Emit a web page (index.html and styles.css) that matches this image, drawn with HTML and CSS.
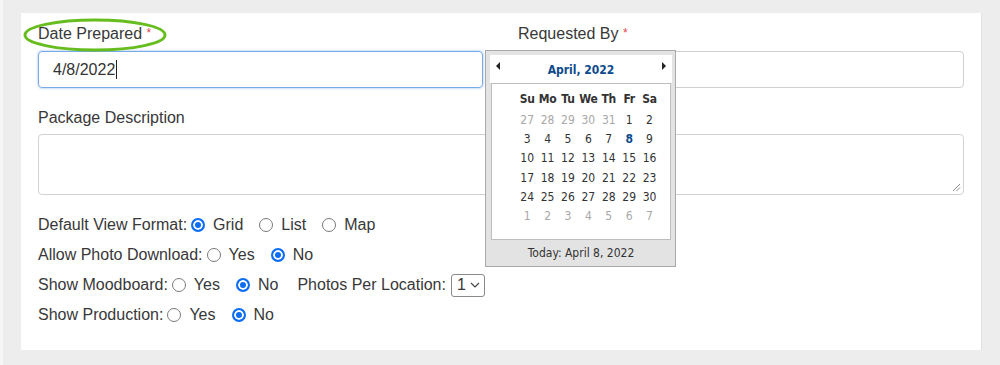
FILE: index.html
```html
<!DOCTYPE html>
<html>
<head>
<meta charset="utf-8">
<link rel="stylesheet" href="styles.css">
</head>
<body>
<div class="page">
  <div class="panel">
    <div class="top-grid">
      <div class="field">
        <div class="label">Date Prepared <span class="req">*</span></div>
        <div class="input focused"><span class="val">4/8/2022</span><span class="caret"></span></div>
      </div>
      <div class="field">
        <div class="label">Requested By <span class="req">*</span></div>
        <div class="input"></div>
      </div>
    </div>
    <div class="field desc">
      <div class="label">Package Description</div>
      <div class="textarea">
        <svg class="grip" width="9" height="9" viewBox="0 0 9 9"><path d="M1 8L8 1M4.5 8L8 4.5" stroke="#8a8a8a" stroke-width="1" fill="none"/></svg>
      </div>
    </div>
    <div class="options">
      <div class="opt-row">
        <span class="opt-label">Default View Format:</span>
        <span class="radio on"></span><span class="opt-text">Grid</span>
        <span class="radio"></span><span class="opt-text">List</span>
        <span class="radio"></span><span class="opt-text">Map</span>
      </div>
      <div class="opt-row">
        <span class="opt-label">Allow Photo Download:</span>
        <span class="radio"></span><span class="opt-text">Yes</span>
        <span class="radio on"></span><span class="opt-text">No</span>
      </div>
      <div class="opt-row">
        <span class="opt-label">Show Moodboard:</span>
        <span class="radio"></span><span class="opt-text">Yes</span>
        <span class="radio on"></span><span class="opt-text">No</span>
        <span class="opt-label extra">Photos Per Location:</span>
        <span class="select">1<svg width="10" height="6" viewBox="0 0 10 6"><path d="M1 1l4 4 4-4" stroke="#444" stroke-width="1.2" fill="none"/></svg></span>
      </div>
      <div class="opt-row last">
        <span class="opt-label">Show Production:</span>
        <span class="radio"></span><span class="opt-text">Yes</span>
        <span class="radio on"></span><span class="opt-text">No</span>
      </div>
    </div>

    <svg class="annot" width="146" height="36" viewBox="0 0 146 36"><ellipse cx="73" cy="18" rx="70" ry="15" fill="none" stroke="#67bd1e" stroke-width="3"/></svg>

    <div class="calendar">
      <div class="cal-head">
        <span class="arrow left"></span>
        <span class="month">April, 2022</span>
        <span class="arrow right"></span>
      </div>
      <div class="cal-body">
        <table class="days">
          <thead><tr><th>Su</th><th>Mo</th><th>Tu</th><th>We</th><th>Th</th><th>Fr</th><th>Sa</th></tr></thead>
          <tbody>
            <tr><td class="o">27</td><td class="o">28</td><td class="o">29</td><td class="o">30</td><td class="o">31</td><td>1</td><td>2</td></tr>
            <tr><td>3</td><td>4</td><td>5</td><td>6</td><td>7</td><td class="today">8</td><td>9</td></tr>
            <tr><td>10</td><td>11</td><td>12</td><td>13</td><td>14</td><td>15</td><td>16</td></tr>
            <tr><td>17</td><td>18</td><td>19</td><td>20</td><td>21</td><td>22</td><td>23</td></tr>
            <tr><td>24</td><td>25</td><td>26</td><td>27</td><td>28</td><td>29</td><td>30</td></tr>
            <tr><td class="o">1</td><td class="o">2</td><td class="o">3</td><td class="o">4</td><td class="o">5</td><td class="o">6</td><td class="o">7</td></tr>
          </tbody>
        </table>
      </div>
      <div class="cal-foot">Today: April 8, 2022</div>
    </div>
  </div>
</div>
</body>
</html>
```

FILE: styles.css
```css
html, body {
  margin: 0;
  padding: 0;
  background: #ededed;
}
body {
  width: 1000px;
  height: 365px;
  overflow: hidden;
  font-family: "Liberation Sans", Arial, sans-serif;
  color: #383838;
}
.page {
  border-left: 3px solid #f6f6f6;
  padding: 13px 0 0 18px;
  height: 352px;
}
.panel {
  position: relative;
  width: 943px;
  height: 337px;
  background: #fff;
  border-right: 1px solid #e0e0e0;
  padding: 0 0 0 17px;
  box-sizing: content-box;
}
.top-grid {
  display: grid;
  grid-template-columns: 445px 446px;
  column-gap: 35px;
  padding-top: 11px;
}
.label {
  font-size: 16px;
  line-height: 20px;
  height: 18px;
  color: #383838;
}
.req {
  color: #e5484d;
  font-size: 12px;
  position: relative;
  top: -2px;
}
.input {
  margin-top: 9px;
  height: 37px;
  box-sizing: border-box;
  border: 1px solid #cfcfcf;
  border-radius: 4px;
  display: flex;
  align-items: center;
  padding-left: 14px;
  font-size: 16px;
  color: #333;
}
.input.focused {
  border-color: #78aae6;
  box-shadow: 0 0 2px 1px rgba(110, 165, 230, 0.35);
}
.caret {
  display: inline-block;
  width: 1px;
  height: 19px;
  background: #222;
  margin-left: 1px;
}
.desc {
  margin-top: 20px;
}
.textarea {
  margin-top: 8px;
  width: 926px;
  height: 61px;
  box-sizing: border-box;
  border: 1px solid #d2d2d2;
  border-radius: 4px;
  position: relative;
}
.grip {
  position: absolute;
  right: 2px;
  bottom: 2px;
}
.options {
  margin-top: 15px;
}
.opt-row {
  display: flex;
  align-items: center;
  height: 30px;
  font-size: 16px;
  color: #383838;
}
.opt-row.last {
  height: 29px;
}
.opt-label {
  margin-right: 4px;
}
.opt-label.extra {
  margin-left: 3px;
  margin-right: 5px;
}
.opt-text {
  margin-left: 8px;
  margin-right: 16px;
}
.radio {
  width: 14px;
  height: 14px;
  box-sizing: border-box;
  border: 1px solid #7a7a7a;
  border-radius: 50%;
  background: #fff;
  flex: none;
}
.radio.on {
  border: 2px solid #0d6ef5;
  background: #0d6ef5;
  box-shadow: inset 0 0 0 2px #fff;
}
.select {
  display: flex;
  align-items: center;
  justify-content: space-between;
  width: 34px;
  height: 23px;
  box-sizing: border-box;
  border: 1px solid #8a8a8a;
  border-radius: 3px;
  padding: 0 4px 0 5px;
  font-size: 16px;
}
.annot {
  position: absolute;
  left: 1px;
  top: 4px;
}
.calendar {
  position: absolute;
  left: 464px;
  top: 37px;
  width: 191px;
  height: 217px;
  box-sizing: border-box;
  border: 1px solid #a9a9a9;
  background: #e3e3e3;
  padding: 4px 3px 0 4px;
  font-family: "DejaVu Sans Condensed", "DejaVu Sans", Verdana, sans-serif;
  display: flex;
  flex-direction: column;
}
.cal-head {
  height: 28px;
  background: #fff;
  display: flex;
  align-items: center;
  justify-content: space-between;
  padding: 0 6px 0 6px;
}
.arrow {
  width: 0;
  height: 0;
  border-top: 4px solid transparent;
  border-bottom: 4px solid transparent;
  margin-top: -6px;
}
.arrow.left {
  border-right: 4px solid #222;
}
.arrow.right {
  border-left: 4px solid #222;
}
.month {
  font-weight: bold;
  font-size: 12px;
  color: #0d4a8c;
  margin-top: 1px;
}
.cal-body {
  margin: 0 1px;
  height: 157px;
  box-sizing: border-box;
  border: 1px solid #bdbdbd;
  background: #fff;
  padding: 3px 0 0 25px;
}
.days {
  border-collapse: collapse;
  font-size: 12px;
  color: #333;
}
.days th {
  font-weight: bold;
  width: 20.4px;
  height: 23px;
  padding: 0;
  text-align: center;
  font-size: 12px;
  letter-spacing: -0.2px;
}
.days td {
  width: 20.4px;
  height: 19.3px;
  padding: 0;
  text-align: center;
}
.days td.o {
  color: #a8a8a8;
}
.days td.today {
  color: #0d4a8c;
  font-weight: bold;
}
.cal-foot {
  flex: 1;
  display: flex;
  align-items: center;
  justify-content: center;
  font-size: 12px;
  color: #333;
  padding-bottom: 1px;
}
```
